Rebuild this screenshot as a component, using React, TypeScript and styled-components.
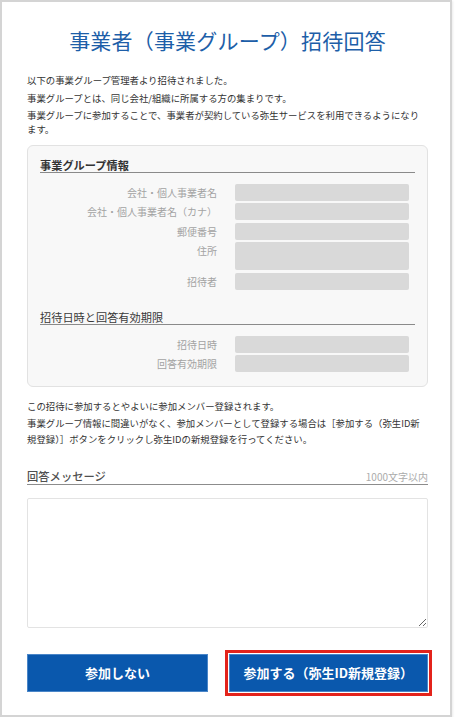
import React from "react";
import styled, { createGlobalStyle } from "styled-components";

const GlobalStyle = createGlobalStyle`
  html, body {
    margin: 0;
    padding: 0;
    background: #ffffff;
  }
  body {
    font-family: "Noto Sans CJK JP", "Noto Sans", sans-serif;
    color: #333333;
  }
  * {
    box-sizing: border-box;
  }
`;

interface Field {
  label: string;
  tall?: boolean;
}

const groupFields: Field[] = [
  { label: "会社・個人事業者名" },
  { label: "会社・個人事業者名（カナ）" },
  { label: "郵便番号" },
  { label: "住所", tall: true },
  { label: "招待者" },
];

const dateFields: Field[] = [{ label: "招待日時" }, { label: "回答有効期限" }];

const App: React.FC = () => {
  return (
    <>
      <GlobalStyle />
      <Card>
        <Title>事業者（事業グループ）招待回答</Title>

        <Intro>
          <p>以下の事業グループ管理者より招待されました。</p>
          <p>事業グループとは、同じ会社/組織に所属する方の集まりです。</p>
          <p>
            事業グループに参加することで、事業者が契約している弥生サービスを利用できるようになり
            <br />
            ます。
          </p>
        </Intro>

        <InfoBox>
          <SectionHeading>事業グループ情報</SectionHeading>
          <FieldList>
            {groupFields.map((f) => (
              <FieldRow key={f.label}>
                <FieldLabel>{f.label}</FieldLabel>
                <FieldValue $tall={f.tall} />
              </FieldRow>
            ))}
          </FieldList>

          <SectionHeading $light $spaced>
            招待日時と回答有効期限
          </SectionHeading>
          <FieldList>
            {dateFields.map((f) => (
              <FieldRow key={f.label}>
                <FieldLabel>{f.label}</FieldLabel>
                <FieldValue />
              </FieldRow>
            ))}
          </FieldList>
        </InfoBox>

        <Note>
          <p>この招待に参加するとやよいに参加メンバー登録されます。</p>
          <p>
            事業グループ情報に間違いがなく、参加メンバーとして登録する場合は［参加する（弥生ID新
            <br />
            規登録）］ボタンをクリックし弥生IDの新規登録を行ってください。
          </p>
        </Note>

        <MessageHeader>
          <span className="message-title">回答メッセージ</span>
          <span className="message-limit">1000文字以内</span>
        </MessageHeader>
        <MessageInput />

        <ButtonRow>
          <ActionButton $width={181}>参加しない</ActionButton>
          <ActionButton $width={199.5} $highlight>
            参加する（弥生ID新規登録）
          </ActionButton>
        </ButtonRow>
      </Card>
    </>
  );
};

const Card = styled.div`
  display: flex;
  flex-direction: column;

  width: 452px;
  height: 717px;
  padding: 22px 22px 0 25px;

  background: #ffffff;
  border: 2px solid #d4d4d4;
  box-shadow: 1px 1px 2px rgba(0, 0, 0, 0.08);
`;

const Title = styled.h1`
  margin: 0;
  font-size: 21px;
  line-height: 32px;
  font-weight: 400;
  color: #1d5ea8;
  text-align: center;
  letter-spacing: 0.2px;
`;

const Intro = styled.div`
  display: flex;
  flex-direction: column;
  gap: 4px;
  margin-top: 18px;

  & > p {
    margin: 0;
    font-size: 9.4px;
    line-height: 13.7px;
    color: #333333;
    white-space: nowrap;
  }
`;

const InfoBox = styled.div`
  display: flex;
  flex-direction: column;

  margin-top: 8px;
  padding: 12px 12px 14px 12px;

  background: #f8f8f8;
  border: 1px solid #e2e2e2;
  border-radius: 6px;
`;

const SectionHeading = styled.div<{ $light?: boolean; $spaced?: boolean }>`
  margin-top: ${({ $spaced }) => ($spaced ? "20px" : "0")};
  height: 15px;
  font-size: 11.2px;
  line-height: 14px;
  font-weight: ${({ $light }) => ($light ? 400 : 700)};
  color: ${({ $light }) => ($light ? "#3a3a3a" : "#333333")};
  border-bottom: 1px solid #8a8a8a;
`;

const FieldList = styled.div`
  display: flex;
  flex-direction: column;
  gap: 2.5px;
  margin-top: 11px;
  padding-right: 6px;
`;

const FieldRow = styled.div`
  display: flex;
  align-items: flex-start;
  gap: 18px;
`;

const FieldLabel = styled.div`
  width: 177px;
  font-size: 10px;
  line-height: 17px;
  color: #a3a3a3;
  text-align: right;
`;

const FieldValue = styled.div<{ $tall?: boolean }>`
  flex: 1;
  height: ${({ $tall }) => ($tall ? "28px" : "17px")};
  background: #d9d9d9;
  border-radius: 2px;
`;

const Note = styled.div`
  margin-top: 11px;

  & > p {
    margin: 0;
    font-size: 9.4px;
    line-height: 16.5px;
    color: #333333;
    white-space: nowrap;
  }
`;

const MessageHeader = styled.div`
  display: flex;
  justify-content: space-between;
  align-items: baseline;

  margin-top: 21px;
  border-bottom: 1.5px solid #8c8c8c;

  .message-title {
    font-size: 11.3px;
    line-height: 14px;
    font-weight: 500;
    color: #505050;
  }

  .message-limit {
    font-size: 10px;
    line-height: 14px;
    color: #ababab;
  }
`;

const MessageInput = styled.textarea`
  display: block;
  width: 100%;
  height: 130px;
  margin-top: 13px;

  background: #ffffff;
  border: 1px solid #e3e3e3;
  border-radius: 2px;
  outline: none;
  resize: vertical;
  font-family: inherit;
`;

const ButtonRow = styled.div`
  display: flex;
  justify-content: space-between;
  margin-top: 26px;
`;

const ActionButton = styled.button<{ $width: number; $highlight?: boolean }>`
  width: ${({ $width }) => $width}px;
  height: 38px;
  padding: 0;

  background: #0a58ad;
  border: 1px solid #4a86c8;
  border-radius: 0;

  font-family: inherit;
  font-size: 13px;
  font-weight: 700;
  color: #ffffff;

  outline: ${({ $highlight }) => ($highlight ? "3px solid #e3231b" : "none")};
  outline-offset: 1.5px;

  :hover {
    cursor: pointer;
  }
`;

export default App;
